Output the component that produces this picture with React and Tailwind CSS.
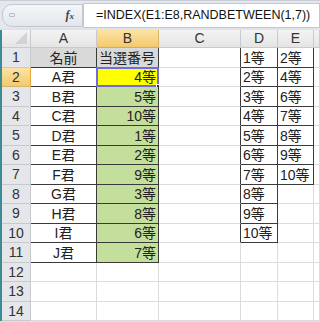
const cols = [
  { key: 'A', w: 'w-[66px]' },
  { key: 'B', w: 'w-[62px]' },
  { key: 'C', w: 'w-[82px]' },
  { key: 'D', w: 'w-[37px]' },
  { key: 'E', w: 'w-[36px]' },
  { key: '', w: 'flex-1' },
];

const names = ['A君', 'B君', 'C君', 'D君', 'E君', 'F君', 'G君', 'H君', 'I君', 'J君'];
const picks = ['4等', '5等', '10等', '1等', '2等', '9等', '3等', '8等', '6等', '7等'];
const dList = ['1等', '2等', '3等', '4等', '5等', '6等', '7等', '8等', '9等', '10等'];
const eList = ['2等', '4等', '6等', '7等', '8等', '9等', '10等'];

// which cells carry the dark table border
const inTable = (c, r) => {
  if (r < 1) return false;
  if ((c === 0 || c === 1) && r <= 11) return true;
  if (c === 3 && r <= 10) return true;
  if (c === 4 && r <= 7) return true;
  return false;
};

const cellData = (c, r) => {
  if (r === 1 && c === 0) return { text: '名前', align: 'justify-center', bg: 'bg-[#d9d9d9]' };
  if (r === 1 && c === 1) return { text: '当選番号', align: 'justify-start', bg: 'bg-[#d9d9d9]' };
  if (c === 0 && r >= 2 && r <= 11) return { text: names[r - 2], align: 'justify-center', bg: 'bg-white' };
  if (c === 1 && r === 2) return { text: picks[0], align: 'justify-end', bg: 'bg-[#ffff00]' };
  if (c === 1 && r >= 3 && r <= 11) return { text: picks[r - 2], align: 'justify-end', bg: 'bg-[#c3df9b]' };
  if (c === 3 && r <= 10) return { text: dList[r - 1], align: 'justify-start', bg: 'bg-white' };
  if (c === 4 && r <= 7) return { text: eList[r - 1], align: 'justify-start', bg: 'bg-white' };
  return { text: '', align: 'justify-start', bg: 'bg-white' };
};

function Cell({ c, r }) {
  const d = cellData(c, r);
  const darkR = inTable(c, r) || inTable(c + 1, r);
  const darkB = inTable(c, r) || inTable(c, r + 1);
  const selected = c === 1 && r === 2;
  return (
    <div
      className={`${cols[c].w} relative flex items-center px-[2px] border-r border-b ${d.align} ${d.bg} ${
        darkR ? 'border-r-[#3a3a3a]' : 'border-r-[#dadcdd]'
      } ${darkB ? 'border-b-[#3a3a3a]' : 'border-b-[#dadcdd]'}`}
    >
      <span className="leading-none">{d.text}</span>
      {selected && (
        <>
          <div className="absolute inset-[-1px] border-2 border-[#6f6be0] pointer-events-none" />
          <div className="absolute right-[-3px] bottom-[-3px] w-[5px] h-[5px] bg-[#3a3a3a] border border-white" />
        </>
      )}
    </div>
  );
}

export default function App() {
  const rows = Array.from({ length: 14 }, (_, i) => i + 1);
  return (
    <div
      className="w-[320px] h-[322px] overflow-hidden bg-[#dfe3e8] text-[14px] text-[#222]"
      style={{ fontFamily: '"Liberation Sans", "Noto Sans CJK JP", sans-serif' }}
    >
      {/* formula bar */}
      <div className="h-[28px] flex items-center pt-[1px] border-t border-[#c9ced6] bg-[#e4e8ee]">
        <div className="ml-[2px] w-[81px] h-[23px] rounded-l-[10px] border border-[#c3c8cf] bg-gradient-to-b from-[#f4f6f9] to-[#e3e7ec] flex items-center justify-between pl-[6px] pr-[8px]">
          <div className="w-[6px] h-[4px] border border-[#b8bdc5] rounded-[1px]" />
          <span className="italic text-[12px] text-[#444] font-bold" style={{ fontFamily: '"Liberation Serif", serif' }}>
            f<span className="text-[9px]">x</span>
          </span>
        </div>
        <div className="flex-1 h-[25px] bg-white border border-[#c3c8cf] flex items-center pl-[12px] text-[12.5px] text-[#111] whitespace-nowrap overflow-hidden">
          =INDEX(E1:E8,RANDBETWEEN(1,7))
        </div>
      </div>
      <div className="h-[2px] bg-[#dfe3e8]" />
      {/* sheet */}
      <div className="flex border-l-2 border-[#3d8a91]">
        <div className="flex-1 flex flex-col bg-white">
          {/* column header */}
          <div className="flex h-[18px] bg-gradient-to-b from-[#f3f3f3] to-[#e4e4e4] text-[#333]">
            <div className="w-[29px] relative border-r border-b border-[#c6c9cd]">
              <div className="absolute right-[3px] bottom-[3px] w-0 h-0 border-l-[12px] border-l-transparent border-b-[12px] border-b-[#d0d2d5]" />
            </div>
            {cols.map((col, i) => (
              <div
                key={i}
                className={`${col.w} flex items-center justify-center border-r border-b ${
                  i === 1
                    ? 'bg-gradient-to-b from-[#fbe3a4] to-[#f4c96b] border-b-[#e8a93a] border-r-[#d6b46a]'
                    : 'border-[#c6c9cd]'
                }`}
              >
                {col.key}
              </div>
            ))}
          </div>
          {rows.map((r) => (
            <div key={r} className={`flex ${r % 2 === 1 ? 'h-[20px]' : 'h-[19px]'}`}>
              <div
                className={`w-[29px] flex items-center justify-center border-r border-b ${
                  r === 2
                    ? 'bg-gradient-to-b from-[#fbe3a4] to-[#f4c96b] border-r-[#e8a93a] border-b-[#d6b46a]'
                    : 'bg-[#e4e6e9] border-[#c6c9cd]'
                } text-[#333]`}
              >
                {r}
              </div>
              {cols.map((col, c) => (
                <Cell key={c} c={c} r={r} />
              ))}
            </div>
          ))}
        </div>
      </div>
    </div>
  );
}
